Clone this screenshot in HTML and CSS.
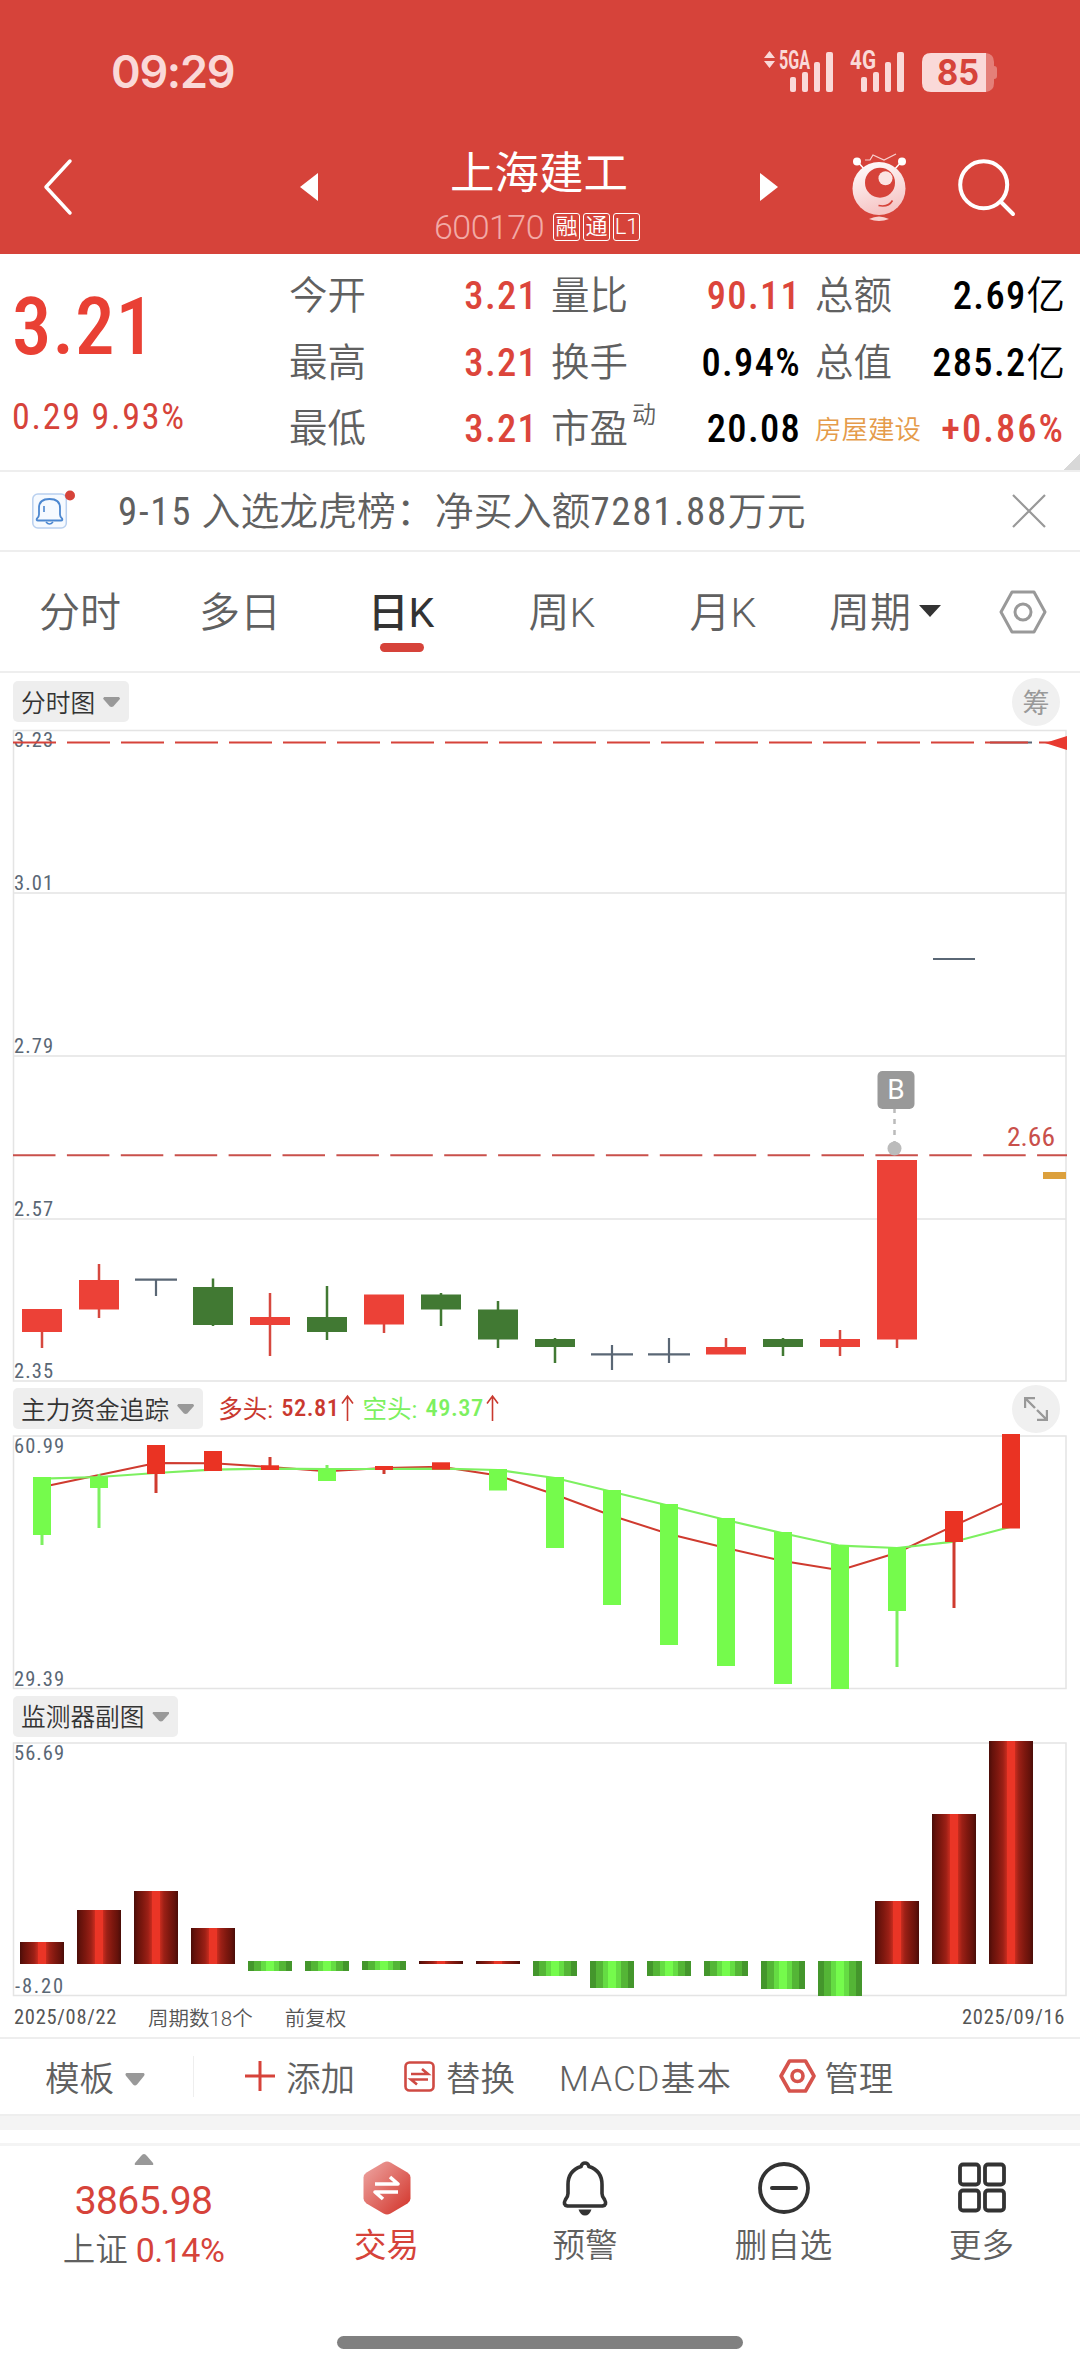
FILE: index.html
```html
<!DOCTYPE html>
<html lang="zh-CN">

<head>
    <meta charset="UTF-8">
    <meta name="viewport" content="width=device-width, initial-scale=1.0">
    <title>上海建工 600170</title>
    <link rel="stylesheet" href="styles.css">
</head>

<body>
    <!-- 状态栏 + 标题栏 -->
    <header class="header">
        <div class="status">
            <span class="time">09:29</span>
            <svg class="status-icons" width="236" height="60" viewBox="762 38 236 60">
                <g fill="#fad9d8">
                    <path d="M764 58l5.500-7 5.500 7zM764 61h11l-5.500 7z" />
                    <text class="net" x="779" y="69" textLength="31" lengthAdjust="spacingAndGlyphs">5GA</text>
                    <rect x="790" y="77" width="6" height="15" rx="2" />
                    <rect x="802" y="72" width="6" height="20" rx="2" />
                    <rect x="814" y="62" width="6" height="30" rx="2" />
                    <rect x="826" y="52" width="7" height="40" rx="2" />
                    <text class="net" x="850" y="69" textLength="26" lengthAdjust="spacingAndGlyphs">4G</text>
                    <rect x="861" y="77" width="6" height="15" rx="2" />
                    <rect x="873" y="72" width="6" height="20" rx="2" />
                    <rect x="885" y="62" width="6" height="30" rx="2" />
                    <rect x="897" y="52" width="7" height="40" rx="2" />
                    <path d="M931 53h55v39h-55q-9 0-9-9V62q0-9 9-9z" />
                    <path d="M986 53q8 1 8 9v4q3 0 3 3v7q0 3-3 3v4q0 8-8 9z" opacity=".4" />
                </g>
                <text class="battery" x="937" y="85" textLength="42" lengthAdjust="spacingAndGlyphs">85</text>
            </svg>
        </div>
        <div class="titlebar">
            <svg class="back" width="32" height="58" viewBox="0 0 32 58">
                <path d="M28 3L4 29l24 26" fill="none" stroke="#fff" stroke-width="3.500" stroke-linecap="round" stroke-linejoin="round" />
            </svg>
            <svg class="prev" width="18" height="28" viewBox="0 0 18 28"><path d="M18 0v28L0 14z" fill="#fff" /></svg>
            <div class="stock">
                <h1>上海建工</h1>
                <p><span class="code">600170</span><i>融</i><i>通</i><i>L1</i></p>
            </div>
            <svg class="next" width="18" height="28" viewBox="0 0 18 28"><path d="M0 0v28l18-14z" fill="#fff" /></svg>
            <svg class="robot" width="60" height="70" viewBox="850 152 60 70">
                <defs>
                    <linearGradient id="robot" x1="0" y1="0" x2=".3" y2="1">
                        <stop offset="0" stop-color="#fff" />
                        <stop offset="1" stop-color="#f6c6c6" />
                    </linearGradient>
                </defs>
                <path d="M857 161l8 9M902 161l-8 9" stroke="#fff" stroke-width="1.500" />
                <circle cx="857" cy="161.500" r="4" fill="#fff" />
                <circle cx="902" cy="161.500" r="4" fill="#fff" />
                <path d="M865 160h5l3-5 11 5 12-6" fill="none" stroke="#f8d0ce" stroke-width="1.200" />
                <circle cx="879" cy="188.500" r="26.500" fill="url(#robot)" />
                <circle cx="880" cy="182.700" r="15" fill="#d6433a" />
                <circle cx="885.500" cy="178.300" r="7" fill="#fbe4e3" />
                <path d="M878.500 205.500q10 2 14-5" fill="none" stroke="#d6433a" stroke-width="1.600" />
                <path d="M869 219q10-5 20 0-10 4-20 0z" fill="#f8d0ce" />
            </svg>
            <svg class="search" width="60" height="62" viewBox="957 157 60 62">
                <circle cx="983.700" cy="184.700" r="23.500" fill="none" stroke="#fff" stroke-width="4" />
                <path d="M1001 202l12 12" stroke="#fff" stroke-width="4" stroke-linecap="round" />
            </svg>
        </div>
    </header>

    <!-- 行情 -->
    <section class="quote">
        <div class="price">
            <strong>3.21</strong>
            <span>0.29 9.93%</span>
        </div>
        <dl class="col col1">
            <dt>今开</dt><dd class="red">3.21</dd>
            <dt>最高</dt><dd class="red">3.21</dd>
            <dt>最低</dt><dd class="red">3.21</dd>
        </dl>
        <dl class="col col2">
            <dt>量比</dt><dd class="red">90.11</dd>
            <dt>换手</dt><dd>0.94%</dd>
            <dt>市盈<sup>动</sup></dt><dd>20.08</dd>
        </dl>
        <dl class="col col3">
            <dt>总额</dt><dd>2.69<em>亿</em></dd>
            <dt>总值</dt><dd>285.2<em>亿</em></dd>
            <dt class="sector">房屋建设</dt><dd class="red">+0.86%</dd>
        </dl>
    </section>

    <!-- 公告 -->
    <section class="notice">
        <svg class="bell" width="46" height="40" viewBox="30 488 46 40">
            <rect x="32.800" y="493" width="33.500" height="34" rx="5" fill="#f6faff" stroke="#b9d0ef" stroke-width="1.500" />
            <path d="M37 517.500q2-1.500 2-4v-6.500q0-9 10.500-9t10.500 9v6.500q0 2.500 2 4 1 2-1 2H38q-2 0-1-2z" fill="none" stroke="#4c87d0" stroke-width="1.800" />
            <path d="M44 505v6M46 521q3.500 4 7 0" fill="none" stroke="#4c87d0" stroke-width="1.600" />
            <circle cx="70" cy="494.500" r="5" fill="#d6433a" />
        </svg>
        <p><b>9-15</b> 入选龙虎榜：净买入额<b>7281.88</b>万元</p>
        <svg width="36" height="36" viewBox="0 0 36 36">
            <path d="M2 2l32 32M34 2L2 34" stroke="#999" stroke-width="2.200" />
        </svg>
    </section>

    <!-- 周期切换 -->
    <nav class="tabs">
        <a>分时</a>
        <a>多日</a>
        <a class="current">日K</a>
        <a>周K</a>
        <a>月K</a>
        <a class="more">周期<svg width="22" height="12" viewBox="0 0 22 12"><path d="M0 0h22L11 12z" fill="#333" /></svg></a>
        <svg class="setting" width="48" height="44" viewBox="0 0 48 44">
            <path d="M13 2h22l11 20-11 20H13L2 22z" fill="none" stroke="#999" stroke-width="3" stroke-linejoin="round" />
            <circle cx="24" cy="22" r="8" fill="none" stroke="#999" stroke-width="3" />
        </svg>
    </nav>

    <!-- K线主图 -->
    <div class="chart-head head1">
        <span class="pill">分时图<i></i></span>
        <span class="round">筹</span>
    </div>
    <svg class="chart" width="1080" height="652" viewBox="0 730 1080 652">
        <g class="grid">
            <path d="M13.500 730.500H1066v650.500H13.500zM13.500 893H1066M13.500 1056H1066M13.500 1219H1066" />
        </g>
        <g class="axis">
            <text x="14" y="747" textLength="39">3.23</text>
            <text x="14" y="890" textLength="39">3.01</text>
            <text x="14" y="1053" textLength="39">2.79</text>
            <text x="14" y="1216" textLength="39">2.57</text>
            <text x="14" y="1378" textLength="39">2.35</text>
        </g>
        <g class="up">
            <path d="M42 1332v16M99 1264v54M270 1293v63M384 1324v9M726 1338v10M840 1330v26M897 1338v10" />
            <rect x="22" y="1309" width="40" height="23" />
            <rect x="79" y="1280" width="40" height="29.500" />
            <rect x="250" y="1317" width="40" height="8" />
            <rect x="364" y="1294.500" width="40" height="30" />
            <rect x="706" y="1347" width="40" height="7.500" />
            <rect x="820" y="1339" width="40" height="8" />
            <rect x="877" y="1160" width="40" height="179.500" />
        </g>
        <g class="down">
            <path d="M213 1278.500v47.500M327 1286v54M441 1293v33M498 1301v47M555 1338v25M783 1338v18" />
            <rect x="193" y="1287" width="40" height="38" />
            <rect x="307" y="1317" width="40" height="15" />
            <rect x="421" y="1294.500" width="40" height="15" />
            <rect x="478" y="1309.500" width="40" height="30" />
            <rect x="535" y="1339" width="40" height="8" />
            <rect x="763" y="1339" width="40" height="8" />
        </g>
        <path class="flat" d="M135 1279.700h42M156 1280v16M591 1354.300h42M612 1345v25M648 1354.300h42M669 1338v25M933 959h42M990 742.500h42" />
        <path d="M13 742.500H1066" stroke="#d6433a" stroke-width="2.200" stroke-dasharray="43 11" />
        <path d="M1067 736v14l-22-7z" fill="#e83a30" />
        <path d="M13 1155.300H1067" stroke="#c9504b" stroke-width="2" stroke-dasharray="42.500 11.400" />
        <text class="mark" x="1007" y="1146" textLength="48" lengthAdjust="spacingAndGlyphs">2.66</text>
        <rect x="1043" y="1172" width="23" height="7" fill="#dca03c" />
        <path d="M894.500 1108v36" stroke="#bbb" stroke-width="2.500" stroke-dasharray="5 6" />
        <circle cx="894.500" cy="1148.500" r="7" fill="#bbb" />
        <rect x="877.500" y="1071" width="37" height="38" rx="5" fill="#999" />
        <text class="buy" x="896" y="1099" text-anchor="middle">B</text>
    </svg>

    <!-- 主力资金追踪 -->
    <div class="chart-head head2">
        <span class="pill">主力资金追踪<i></i></span>
        <span class="legend long">多头: <b>52.81</b><svg width="13" height="27" viewBox="0 0 13 27"><path d="M6.500 27V2M1 9.500L6.500 2 12 9.500" fill="none" stroke="#c9392f" stroke-width="1.600" /></svg></span>
        <span class="legend short">空头: <b>49.37</b><svg width="13" height="27" viewBox="0 0 13 27"><path d="M6.500 27V2M1 9.500L6.500 2 12 9.500" fill="none" stroke="#c9392f" stroke-width="1.600" /></svg></span>
        <span class="round"><svg width="24" height="24" viewBox="0 0 24 24"><path d="M1 11V1h10M1 1l10 10M23 13v10H13M23 23L13 13" fill="none" stroke="#999" stroke-width="2.400" /></svg></span>
    </div>
    <svg class="chart" width="1080" height="255" viewBox="0 1435 1080 255">
        <g class="grid">
            <path d="M13.500 1436H1066v252.500H13.500z" />
        </g>
        <g class="axis">
            <text x="14" y="1453" textLength="50">60.99</text>
            <text x="14" y="1685.500" textLength="50">29.39</text>
        </g>
        <polyline fill="none" stroke="#cf3b2f" stroke-width="2" points="42,1487 99,1475 156,1463 213,1463.300 270,1467 327,1471.300 384,1468 441,1466.700 498,1475.500 555,1494.500 612,1515.700 669,1534 726,1548 783,1561 840,1570.300 897,1552.700 954,1525.700 1011,1499.700" />
        <polyline fill="none" stroke="#7df060" stroke-width="2.200" points="42,1478.700 99,1477 156,1473 213,1469.700 270,1468.700 327,1469 384,1469 441,1468.700 498,1470 555,1478 612,1491.700 669,1505.700 726,1520 783,1533.300 840,1545.700 897,1548 954,1541.700 1011,1526.700" />
        <g class="bear">
            <path d="M42 1535v10M99 1474v54M327 1465v6M897 1610v57" />
            <rect x="33" y="1477" width="18" height="58" />
            <rect x="90" y="1477" width="18" height="11" />
            <rect x="318" y="1469" width="18" height="12" />
            <rect x="489" y="1469" width="18" height="21.500" />
            <rect x="546" y="1477" width="18" height="71" />
            <rect x="603" y="1490" width="18" height="115" />
            <rect x="660" y="1504" width="18" height="141" />
            <rect x="717" y="1518" width="18" height="148" />
            <rect x="774" y="1532" width="18" height="152" />
            <rect x="831" y="1545" width="18" height="144" />
            <rect x="888" y="1547.500" width="18" height="63.500" />
        </g>
        <g class="bull">
            <path d="M156 1473v20M270 1457v10M384 1468v6M954 1541v67" />
            <rect x="147" y="1445" width="18" height="29" />
            <rect x="204" y="1451" width="18" height="20" />
            <rect x="261" y="1465.300" width="18" height="4.700" />
            <rect x="375" y="1466" width="18" height="4" />
            <rect x="432" y="1462.300" width="18" height="7.400" />
            <rect x="945" y="1511" width="18" height="31" />
            <rect x="1002" y="1434" width="18" height="94.500" />
        </g>
    </svg>

    <!-- 监测器副图 -->
    <div class="chart-head head3">
        <span class="pill">监测器副图<i></i></span>
    </div>
    <svg class="chart" width="1080" height="255" viewBox="0 1742 1080 255">
        <defs>
            <linearGradient id="red">
                <stop offset="0" stop-color="#4a0d08" />
                <stop offset=".08" stop-color="#65120b" />
                <stop offset=".2" stop-color="#7f180f" />
                <stop offset=".32" stop-color="#9c2016" />
                <stop offset=".4" stop-color="#c42b1e" />
                <stop offset=".42" stop-color="#ea3526" />
                <stop offset=".58" stop-color="#ea3526" />
                <stop offset=".6" stop-color="#c42b1e" />
                <stop offset=".68" stop-color="#9c2016" />
                <stop offset=".8" stop-color="#7f180f" />
                <stop offset=".92" stop-color="#65120b" />
                <stop offset="1" stop-color="#4a0d08" />
            </linearGradient>
            <linearGradient id="green">
                <stop offset=".13" stop-color="#44962c" />
                <stop offset=".13" stop-color="#54b536" />
                <stop offset=".3" stop-color="#54b536" />
                <stop offset=".3" stop-color="#65dc43" />
                <stop offset=".4" stop-color="#65dc43" />
                <stop offset=".4" stop-color="#75fb4c" />
                <stop offset=".6" stop-color="#75fb4c" />
                <stop offset=".6" stop-color="#65dc43" />
                <stop offset=".7" stop-color="#65dc43" />
                <stop offset=".7" stop-color="#54b536" />
                <stop offset=".87" stop-color="#54b536" />
                <stop offset=".87" stop-color="#44962c" />
            </linearGradient>
        </defs>
        <g class="grid">
            <path d="M13.500 1743H1066v252.500H13.500z" />
        </g>
        <g class="axis">
            <text x="14" y="1760" textLength="50">56.69</text>
            <text x="15" y="1992.500" textLength="48">-8.20</text>
        </g>
        <g fill="url(#red)">
            <rect x="20" y="1942" width="44" height="22" />
            <rect x="77" y="1910" width="44" height="54" />
            <rect x="134" y="1891" width="44" height="73" />
            <rect x="191" y="1928" width="44" height="36" />
            <rect x="419" y="1961" width="44" height="3" />
            <rect x="476" y="1961" width="44" height="3" />
            <rect x="875" y="1901" width="44" height="63" />
            <rect x="932" y="1814" width="44" height="150" />
            <rect x="989" y="1741" width="44" height="223" />
        </g>
        <g fill="url(#green)">
            <rect x="248" y="1961" width="44" height="10" />
            <rect x="305" y="1961" width="44" height="10" />
            <rect x="362" y="1961" width="44" height="9" />
            <rect x="533" y="1961" width="44" height="15" />
            <rect x="590" y="1961" width="44" height="27" />
            <rect x="647" y="1961" width="44" height="15" />
            <rect x="704" y="1961" width="44" height="15" />
            <rect x="761" y="1961" width="44" height="28" />
            <rect x="818" y="1961" width="44" height="35" />
        </g>
    </svg>
    <div class="dates">
        <span class="d1">2025/08/22</span>
        <span class="d2">周期数18个</span>
        <span class="d3">前复权</span>
        <span class="d4">2025/09/16</span>
    </div>

    <!-- 指标工具栏 -->
    <div class="tools">
        <span class="tpl">模板<svg width="20" height="13" viewBox="0 0 20 13"><path d="M1.500 0h17q2 1 0 3.500l-6.500 8q-2 2-4 0l-6.500-8q-2-2.500 0-3.500z" fill="#999" /></svg></span>
        <span class="add"><svg width="30" height="30" viewBox="0 0 30 30"><path d="M15 0v30M0 15h30" stroke="#d6433a" stroke-width="3" /></svg>添加</span>
        <span class="swap"><svg width="31" height="31" viewBox="0 0 31 31"><rect x="1.500" y="1.500" width="28" height="28" rx="4" fill="none" stroke="#cf4a43" stroke-width="2.600" /><path d="M7 13h17l-6-5M24 18.500H7l6 5" fill="none" stroke="#cf4a43" stroke-width="2.600" /></svg>替换</span>
        <span class="macd">MACD基本</span>
        <span class="manage"><svg width="37" height="34" viewBox="0 0 37 34"><path d="M10.500 2h16l8.500 15-8.500 15h-16L2 17z" fill="none" stroke="#d6534c" stroke-width="3.600" stroke-linejoin="round" /><circle cx="18.500" cy="17" r="5.500" fill="none" stroke="#d6534c" stroke-width="3.600" /></svg>管理</span>
    </div>
    <div class="band"></div>

    <!-- 底部导航 -->
    <footer class="footer">
        <div class="index">
            <svg width="20" height="11" viewBox="0 0 20 11"><path d="M10 0q1.500 0 3 2l6 7q1 2-1 2H2q-2 0-1-2l6-7q1.500-2 3-2z" fill="#999" /></svg>
            <span class="point">3865.98</span>
            <p>上证<span>0.14%</span></p>
        </div>
        <a class="trade">
            <svg width="48" height="56" viewBox="0 0 48 56">
                <defs>
                    <linearGradient id="hex" x1="0" y1="0" x2="1" y2="1">
                        <stop offset=".1" stop-color="#eb9c98" />
                        <stop offset=".85" stop-color="#d6433a" />
                    </linearGradient>
                </defs>
                <path d="M20.500 2.500q3.500-2 7 0l17 10q3 2 3 5v21q0 3-3 5l-17 10q-3.500 2-7 0l-17-10q-3-2-3-5v-21q0-3 3-5z" fill="url(#hex)" />
                <path d="M12 24h23l-8-7M35 32H12l8 7" fill="none" stroke="#fff" stroke-width="3.600" stroke-linejoin="round" />
            </svg>
            交易
        </a>
        <a>
            <svg width="48" height="56" viewBox="0 0 48 56">
                <path d="M24 3q3 0 4 3.500c9 3 13 10 13 18v9q0 3 2.500 6 3 5.500-2 6.500h-35q-5-1-2-6.500Q7 36.500 7 33.500v-9c0-8 4-15 13-18Q21 3 24 3z" fill="none" stroke="#333" stroke-width="3.600" />
                <path d="M17.500 49.500h13q-2 6-6.500 6t-6.500-6z" fill="#333" />
            </svg>
            预警
        </a>
        <a>
            <svg width="52" height="56" viewBox="0 0 52 56">
                <circle cx="26" cy="28" r="24" fill="none" stroke="#333" stroke-width="3.800" />
                <path d="M14 28h24" stroke="#333" stroke-width="4" stroke-linecap="round" />
            </svg>
            删自选
        </a>
        <a>
            <svg width="50" height="56" viewBox="0 0 50 56">
                <g fill="none" stroke="#333" stroke-width="3.800">
                    <rect x="3" y="4.500" width="19" height="20" rx="3" />
                    <rect x="28" y="4.500" width="19" height="20" rx="3" />
                    <rect x="3" y="30.500" width="19" height="20" rx="3" />
                    <rect x="28" y="30.500" width="19" height="20" rx="3" />
                </g>
            </svg>
            更多
        </a>
    </footer>
    <div class="home"></div>
</body>

</html>
```

FILE: styles.css
```css
* {
    margin: 0;
    padding: 0;
    box-sizing: border-box;
}

body {
    width: 1080px;
    height: 2373px;
    background-color: #fff;
    color: #606060;
    font-family: Roboto, "Noto Sans CJK SC", sans-serif;
    font-weight: 350;
    overflow-x: hidden;
}

svg {
    display: block;
    flex: none;
}

i,
em {
    font-style: normal;
}

/* 头部 */
.header {
    height: 254px;
    background-color: #d6433a;
    color: #fff;
}

.status {
    display: flex;
    justify-content: space-between;
    height: 142px;
    padding: 38px 82px 0 111px;
}

.time {
    color: #fad9d8;
    font-family: Inter, sans-serif;
    font-size: 45px;
    font-weight: 600;
    line-height: 67px;
    letter-spacing: -1.3px;
}

.net {
    font-family: Roboto, sans-serif;
    font-size: 25px;
    font-weight: 700;
}

.battery {
    fill: #d6433a;
    font-family: Inter, sans-serif;
    font-size: 35px;
    font-weight: 700;
}

.titlebar {
    display: flex;
    height: 112px;
}

.back {
    margin: 16px 0 0 42px;
}

.prev {
    margin: 31px 0 0 226px;
}

.stock {
    width: 442px;
    padding-top: 2px;
    text-align: center;
}

.stock h1 {
    font-size: 44.500px;
    font-weight: 400;
    line-height: 60px;
}

.stock p {
    display: flex;
    justify-content: center;
    align-items: center;
    gap: 3px;
    height: 46px;
    padding-right: 4px;
}

.code {
    margin-right: 6px;
    color: #f2aaa6;
    font-size: 34px;
    letter-spacing: -0.5px;
}

.stock i {
    width: 27px;
    height: 28px;
    border: 1.5px solid #fff;
    border-radius: 3px;
    font-size: 22px;
    line-height: 25px;
}

.next {
    margin-top: 31px;
}

.robot {
    margin: 10px 0 0 72px;
}

.search {
    margin: 15px 0 0 47px;
}

/* 行情 */
.quote {
    display: flex;
    height: 218px;
    padding-top: 9px;
    border-bottom: 2px solid #eee;
    background: linear-gradient(135deg, transparent 50%, #d8d8d8 50%) right bottom / 17px 17px no-repeat;
}

.price {
    width: 289px;
    padding-left: 12px;
    color: #d6433a;
}

.price strong {
    display: block;
    margin-top: 17px;
    color: #e94034;
    font-size: 79px;
    font-stretch: 87%;
    font-weight: 480;
    line-height: 94px;
    letter-spacing: 0.8px;
}

.price span {
    display: block;
    margin-top: 21px;
    font-size: 36px;
    font-stretch: 87%;
    font-weight: 450;
    line-height: 44px;
    letter-spacing: 1.700px;
}

.col {
    display: grid;
    grid-template-columns: auto auto;
    grid-template-rows: repeat(3, 66.500px);
    justify-content: space-between;
    align-items: center;
    font-size: 38.500px;
    white-space: nowrap;
}

.col1 {
    width: 249px;
}

.col2 {
    width: 250px;
    margin-left: 13px;
}

.col3 {
    width: 250px;
    margin-left: 14px;
}

.col dt,
.col dd {
    line-height: 66px;
}

.col sup {
    font-size: 24px;
    line-height: 20px;
    vertical-align: 19px;
    margin-left: 4px;
}

.col dd {
    color: #000;
    font-stretch: 87%;
    font-weight: 460;
    letter-spacing: 1.3px;
    text-align: right;
}

.col dd em {
    font-weight: 350;
    letter-spacing: 0;
}

.col .red {
    color: #dc453b;
}

.col3 .red {
    letter-spacing: 2px;
}

.col .sector {
    color: #e59b4a;
    font-size: 26.500px;
    padding-top: 2px;
}

/* 公告 */
.notice {
    display: flex;
    align-items: center;
    height: 80px;
    padding: 0 33px 0 30px;
    border-bottom: 2px solid #eee;
}

.bell {
    margin-top: -5px;
}

.notice p {
    flex: 1;
    margin: -7px 0 0 42px;
    font-size: 38.900px;
    white-space: nowrap;
}

.notice b {
    font-stretch: 87%;
    font-weight: 450;
    letter-spacing: 1.7px;
}

/* 周期 */
.tabs {
    display: grid;
    grid-template-columns: 160px 160px 162px 160px 162px 170px 1fr;
    align-items: center;
    height: 121px;
    border-bottom: 2px solid #eee;
    font-size: 41px;
}

.tabs a {
    position: relative;
    margin-top: -6px;
    text-align: center;
    white-space: nowrap;
}

.tabs .current {
    color: #333;
    font-weight: 450;
}

.tabs .current::after {
    content: "";
    position: absolute;
    left: 60px;
    bottom: -13px;
    width: 44px;
    height: 9px;
    border-radius: 5px;
    background-color: #d6433a;
}

.more {
    display: flex;
    align-items: center;
    gap: 8px;
    padding-left: 25px;
}

.more svg {
    margin-top: 4px;
}

.setting {
    margin-left: 25px;
}

/* 图表 */
.chart-head {
    display: flex;
    align-items: center;
    padding: 0 20px 0 13px;
}

.head1 {
    height: 57px;
}

.head2 {
    height: 53px;
}

.head3 {
    height: 52px;
}

.pill {
    display: flex;
    align-items: center;
    gap: 8px;
    height: 41px;
    padding: 0 9px 2px 8px;
    border-radius: 5px;
    background-color: #eee;
    color: #333;
    font-size: 24.700px;
}

.pill i {
    width: 17px;
    height: 10px;
    margin-top: 3px;
    background-color: #999;
    clip-path: polygon(6% 0, 94% 0, 100% 18%, 60% 95%, 50% 100%, 40% 95%, 0 18%);
}

.round {
    display: flex;
    justify-content: center;
    align-items: center;
    width: 48px;
    height: 48px;
    margin-left: auto;
    border-radius: 50%;
    background-color: #f0f0f0;
    color: #999;
    font-size: 27px;
    font-weight: 400;
}

.legend {
    display: flex;
    align-items: center;
    gap: 2px;
    margin: -2px 0 0 15px;
    font-size: 24.500px;
    font-weight: 400;
    white-space: pre;
}

.legend b {
    font-size: 24.500px;
    font-stretch: 87%;
    font-weight: 550;
    letter-spacing: 0.5px;
}

.long {
    color: #c9392f;
}

.short {
    margin-left: 8px;
    color: #7df060;
}

.chart {
    overflow: visible;
}

.grid {
    fill: none;
    stroke: #e4e4e4;
    stroke-width: 1.5;
}

.axis {
    fill: #5a6775;
    font-size: 20.500px;
    font-stretch: 87%;
    font-weight: 420;
}

.up {
    fill: #ec4137;
    stroke: none;
}

.up path {
    stroke: #d6483f;
    stroke-width: 2.500;
}

.down {
    fill: #417933;
}

.down path {
    stroke: #417933;
    stroke-width: 2.500;
}

.flat {
    stroke: #5a6775;
    stroke-width: 2.200;
}

.mark {
    fill: #c9504b;
    font-size: 26px;
    font-stretch: 87%;
    font-weight: 450;
}

.buy {
    fill: #fff;
    font-size: 28px;
    font-weight: 400;
}

.bear {
    fill: #75fb4c;
}

.bear path {
    stroke: #7df060;
    stroke-width: 3;
}

.bull {
    fill: #ea3323;
}

.bull path {
    stroke: #cf3b2f;
    stroke-width: 3;
}

.dates {
    display: flex;
    align-items: center;
    height: 40px;
    padding: 0 14px;
    color: #555;
    font-size: 20.500px;
}

.d1,
.d4 {
    width: 104px;
    font-stretch: 87%;
    font-weight: 420;
    letter-spacing: 0.7px;
    white-space: nowrap;
}

.d2 {
    margin-left: 30px;
}

.d3 {
    margin-left: 32px;
}

.d4 {
    margin-left: auto;
}

/* 工具栏 */
.tools {
    display: flex;
    align-items: center;
    height: 77px;
    padding: 0 0 1px 45px;
    border-top: 2px solid #eee;
    font-size: 34.500px;
    white-space: nowrap;
}

.tools span {
    display: flex;
    align-items: center;
    gap: 11px;
}

.tools .tpl {
    width: 149px;
    height: 41px;
    border-right: 1px solid #eee;
}

.tpl svg {
    margin-top: 6px;
}

.add {
    margin-left: 51px;
}

.swap {
    margin-left: 49px;
}

.macd {
    margin-left: 44px;
    letter-spacing: 1.300px;
}

.tools .manage {
    gap: 8px;
    margin-left: 47px;
}

.band {
    height: 16px;
    background-color: #f4f4f4;
    border-top: 2px solid #eee;
}

/* 底部 */
.footer {
    display: grid;
    grid-template-columns: 287px 199px 198px 199px 197px;
    height: 160px;
    margin-top: 13px;
    border-top: 3px solid #f4f4f4;
    font-size: 32.500px;
}

.footer a {
    display: flex;
    flex-direction: column;
    align-items: center;
    padding-top: 14px;
    line-height: 60px;
}

.footer .trade {
    color: #d6433a;
    font-weight: 400;
}

.index {
    display: flex;
    flex-direction: column;
    align-items: center;
    padding-top: 8px;
}

.point {
    margin-top: 2px;
    color: #d6433a;
    font-size: 39px;
    font-weight: 380;
    line-height: 68px;
    letter-spacing: -0.6px;
}

.index p {
    display: flex;
    gap: 8px;
    line-height: 30px;
}

.index p span {
    color: #d6433a;
    font-size: 34px;
    font-weight: 380;
    letter-spacing: -0.5px;
}

.home {
    width: 406px;
    height: 13px;
    margin: 33px auto 0;
    border-radius: 7px;
    background-color: #808080;
}
```
